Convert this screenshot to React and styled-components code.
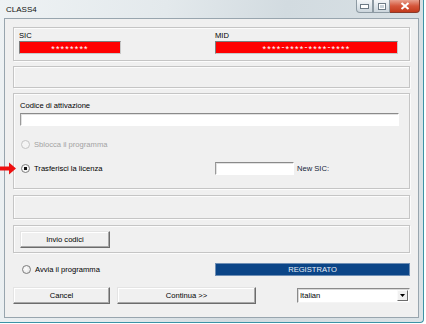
import React from "react";
import styled, { createGlobalStyle } from "styled-components";

const GlobalStyle = createGlobalStyle`
  * { box-sizing: border-box; }
  body {
    margin: 0;
    background: #ffffff;
    font-family: "Liberation Sans", Arial, sans-serif;
    font-size: 7.6px;
    color: #000;
  }
`;

const RedArrow = () => (
  <svg width="16" height="13" viewBox="0 0 16 13">
    <path d="M0 4.5 H9 V0.5 L16 6.5 L9 12.5 V8.5 H0 Z" fill="#ee1010" />
  </svg>
);

// asterisks sit high in Liberation Sans, push them down to line up with the dashes
const Masked = ({ value }) =>
  value.split("-").map((part, i) => (
    <React.Fragment key={i}>
      {i > 0 && "-"}
      <Stars>{part}</Stars>
    </React.Fragment>
  ));

const App = () => {
  return (
    <>
      <GlobalStyle />
      <Window>
        <TitleBar>
          <Title>CLASS4</Title>
          <Captions>
            <CaptionButton>
              <svg width="9" height="5" viewBox="0 0 9 5">
                <rect x="0.5" y="0.5" width="8" height="4" fill="#fff" stroke="#6d7b86" />
              </svg>
            </CaptionButton>
            <CaptionButton>
              <svg width="8" height="7" viewBox="0 0 8 7">
                <rect x="0.5" y="0.5" width="7" height="6" fill="#fff" stroke="#6d7b86" />
                <rect x="2" y="2" width="4" height="3" fill="#c9d3da" />
              </svg>
            </CaptionButton>
            <CaptionButton $close>
              <svg width="10" height="8" viewBox="0 0 10 8">
                <path d="M1.5 1 L8.5 7 M8.5 1 L1.5 7" stroke="#fff" strokeWidth="2" />
              </svg>
            </CaptionButton>
          </Captions>
        </TitleBar>

        <Client>
          <Group $h={34} $pad="2px 5px 0">
            <TwoCols>
              <Col>
                <Label>SIC</Label>
                <RedField $w={102}>
                  <Masked value="********" />
                </RedField>
              </Col>
              <Col>
                <Label>MID</Label>
                <RedField $w={183}>
                  <Masked value="****-****-****-****" />
                </RedField>
              </Col>
            </TwoCols>
          </Group>

          <Group $h={22} $mt={5} />

          <Group $h={96} $mt={5} $pad="6px 6px 0">
            <Label>Codice di attivazione</Label>
            <TextInput $w={379} $mt={2} />
            <Row $mt={12}>
              <RadioItem $w={195}>
                <Radio $disabled />
                <RadioLabel $disabled>Sblocca il programma</RadioLabel>
              </RadioItem>
            </Row>
            <Row $mt={11}>
              <ArrowSlot>
                <RedArrow />
              </ArrowSlot>
              <RadioItem $w={195}>
                <Radio $checked />
                <RadioLabel>Trasferisci la licenza</RadioLabel>
              </RadioItem>
              <TextInput $w={79} />
              <SideLabel>New SIC:</SideLabel>
            </Row>
          </Group>

          <Group $h={24} $mt={6} />

          <Group $h={28} $mt={6} $pad="5px 6px 0">
            <Button $w={90}>Invio codici</Button>
          </Group>

          <Row $mt={10} $pl={8}>
            <RadioItem $w={194}>
              <Radio />
              <RadioLabel>Avvia il programma</RadioLabel>
            </RadioItem>
            <StatusBar>REGISTRATO</StatusBar>
          </Row>

          <Row $mt={13}>
            <Button $w={97}>Cancel</Button>
            <Button $w={139} $ml={7}>
              Continua &gt;&gt;
            </Button>
            <Select $ml={41}>
              <span>Italian</span>
              <DropButton>
                <svg width="5" height="3" viewBox="0 0 5 3">
                  <path d="M0 0 H5 L2.5 3 Z" fill="#000" />
                </svg>
              </DropButton>
            </Select>
          </Row>
        </Client>
      </Window>
    </>
  );
};

export default App;

const Window = styled.div`
  width: 424px;
  height: 323px;
  padding: 0 4px 4px 4px;
  display: flex;
  flex-direction: column;
  background: linear-gradient(100deg, #eef2f4 0%, #e3e9ec 35%, #d2dbe0 60%, #dae2e6 100%);
  border-right: 1px solid #3c93a6;
  border-bottom: 1px solid #3c93a6;
  border-bottom-right-radius: 4px;
`;

const TitleBar = styled.div`
  height: 18px;
  display: flex;
  align-items: flex-start;
  justify-content: space-between;
`;

const Title = styled.div`
  padding: 5px 0 0 2px;
  font-size: 8px;
  color: #111;
`;

const Captions = styled.div`
  display: flex;
  margin-right: -1px;
`;

const CaptionButton = styled.div`
  width: ${(p) => (p.$close ? "30px" : "17px")};
  height: 13px;
  display: flex;
  align-items: center;
  justify-content: center;
  border: 1px solid ${(p) => (p.$close ? "#8a3a2a" : "#8d9aa3")};
  border-top: none;
  border-left: ${(p) => (p.$close ? "none" : undefined)};
  background: ${(p) =>
    p.$close
      ? "linear-gradient(#e8a08e 0%, #d5563b 50%, #c23a1c 100%)"
      : "linear-gradient(#f4f7f9 0%, #dfe6eb 50%, #cbd5dc 100%)"};
  &:first-child {
    border-bottom-left-radius: 4px;
  }
  &:last-child {
    border-bottom-right-radius: 4px;
  }
`;

const Client = styled.div`
  flex: 1;
  background: #f0f0f0;
  border: 1px solid #98a5ae;
  padding: 8px 8px 0 8px;
  display: flex;
  flex-direction: column;
`;

const Group = styled.div`
  height: ${(p) => p.$h}px;
  margin-top: ${(p) => p.$mt || 0}px;
  padding: ${(p) => p.$pad || "0"};
  border: 1px solid #c5c5c5;
  box-shadow: inset 1px 1px 0 #fcfcfc, 1px 1px 0 #fcfcfc;
  display: flex;
  flex-direction: column;
`;

const TwoCols = styled.div`
  display: grid;
  grid-template-columns: 196px 1fr;
`;

const Col = styled.div`
  display: flex;
  flex-direction: column;
`;

const Label = styled.div`
  height: 11px;
  line-height: 11px;
`;

const RedField = styled.div`
  width: ${(p) => p.$w}px;
  height: 13px;
  background: #ff0000;
  border: 1px solid #7c7c7c;
  border-right-color: #c8c8c8;
  border-bottom-color: #c8c8c8;
  color: #fff;
  text-align: center;
  font-size: 9px;
  line-height: 11px;
  letter-spacing: 1.2px;
`;

const Stars = styled.span`
  position: relative;
  top: 1.5px;
`;

const TextInput = styled.div`
  width: ${(p) => p.$w}px;
  height: 13px;
  margin-top: ${(p) => p.$mt || 0}px;
  background: #fff;
  border: 1px solid #fff;
  border-top: 1px solid #8a8a8a;
  border-left: 1px solid #9a9a9a;
  box-shadow: inset 1px 1px 0 #e2e2e2;
`;

const Row = styled.div`
  position: relative;
  display: flex;
  align-items: center;
  height: 13px;
  margin-top: ${(p) => p.$mt || 0}px;
  padding-left: ${(p) => p.$pl || 0}px;
`;

const ArrowSlot = styled.div`
  position: absolute;
  left: -20px;
  top: 0;
  display: flex;
`;

const RadioItem = styled.div`
  width: ${(p) => p.$w}px;
  display: flex;
  align-items: center;
  gap: 4px;
  padding-left: 1px;
`;

const Radio = styled.span`
  width: 9px;
  height: 9px;
  border-radius: 50%;
  border: 1px solid ${(p) => (p.$disabled ? "#c4c4c4" : "#7d7d7d")};
  background: ${(p) =>
    p.$disabled
      ? "#f4f4f4"
      : p.$checked
      ? "radial-gradient(circle, #111 0 1.6px, #f6f6f6 2px)"
      : "radial-gradient(circle at 40% 40%, #ffffff, #dcdcdc)"};
  flex-shrink: 0;
`;

const RadioLabel = styled.span`
  color: ${(p) => (p.$disabled ? "#a3a3a3" : "#000")};
`;

const SideLabel = styled.span`
  margin-left: 3px;
  color: #15253a;
`;

const Button = styled.div`
  width: ${(p) => p.$w}px;
  height: 17px;
  margin-left: ${(p) => p.$ml || 0}px;
  display: flex;
  align-items: center;
  justify-content: center;
  background: #f0f0f0;
  border: 1px solid;
  border-color: #e4e4e4 #6c6c6c #6c6c6c #e4e4e4;
  box-shadow: inset -1px -1px 0 #a8a8a8, inset 1px 1px 0 #ffffff;
`;

const StatusBar = styled.div`
  width: 195px;
  height: 13px;
  background: #0b4587;
  border: 1px solid #6f8fb5;
  color: #e8eef6;
  text-align: center;
  line-height: 11px;
`;

const Select = styled.div`
  width: 113px;
  height: 15px;
  margin-left: ${(p) => p.$ml || 0}px;
  background: #fff;
  border: 1px solid;
  border-color: #8a8a8a #f4f4f4 #f4f4f4 #8a8a8a;
  box-shadow: inset 1px 1px 0 #d8d8d8;
  display: flex;
  align-items: center;
  justify-content: space-between;
  padding: 0 1px 0 2px;
`;

const DropButton = styled.div`
  width: 11px;
  height: 11px;
  display: flex;
  align-items: center;
  justify-content: center;
  background: #f0f0f0;
  border: 1px solid;
  border-color: #fafafa #6c6c6c #6c6c6c #fafafa;
`;
